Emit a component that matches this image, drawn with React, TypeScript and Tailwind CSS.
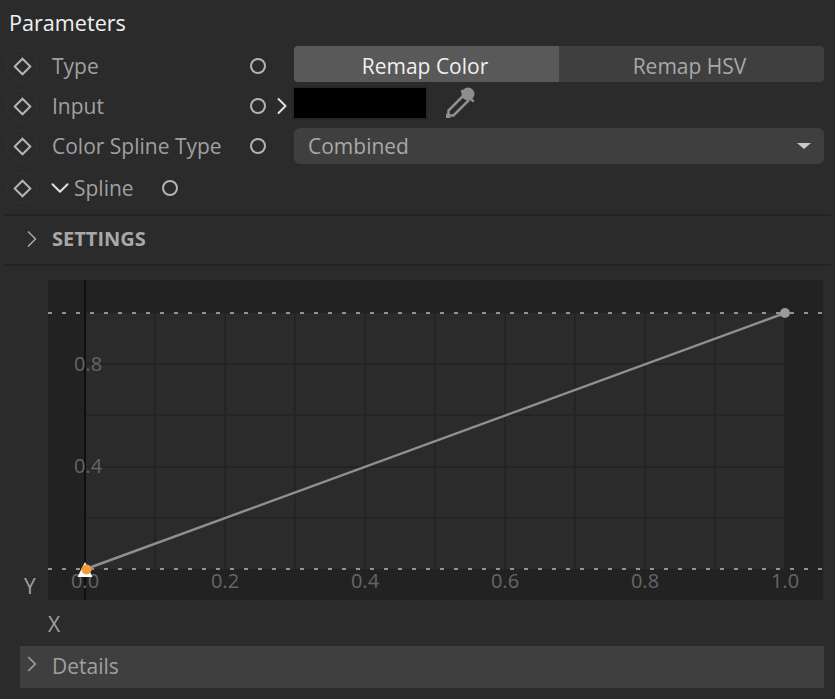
import type { ReactNode } from 'react';
import { ChevronDown, ChevronRight } from 'lucide-react';

const font = { fontFamily: '"Open Sans", "Noto Sans", sans-serif' };

function KeyDiamond() {
  return (
    <span className="flex h-8 w-8 shrink-0 items-center justify-center rounded-full border border-[#323232]">
      <span className="h-[13px] w-[13px] rotate-45 border-2 border-[#b4b4b4]" />
    </span>
  );
}

function Socket() {
  return <span className="block h-4 w-4 shrink-0 rounded-full border-[2.5px] border-[#b4b4b4]" />;
}

function Row({ label, children, arrow }: { label: string; children?: ReactNode; arrow?: boolean }) {
  return (
    <div className="flex h-10 items-center">
      <div className="ml-[6px] mr-[14px]">
        <KeyDiamond />
      </div>
      <span className="w-[198px] shrink-0 text-[#a0a0a0]">{label}</span>
      <Socket />
      <span className="flex w-[28px] shrink-0 justify-center">
        {arrow && (
          <ChevronRight className="h-[28px] w-[28px] shrink-0 translate-x-[2px] text-[#e0e0e0]" strokeWidth={1.7} />
        )}
      </span>
      {children}
    </div>
  );
}

function SplineChart() {
  const xTicks = [85, 155, 225, 295, 365, 435, 505, 575, 645, 715, 785];
  const yTicks = [364, 415, 467, 518];
  const labels = [
    [85, '0.0'],
    [225, '0.2'],
    [365, '0.4'],
    [505, '0.6'],
    [645, '0.8'],
    [785, '1.0'],
  ] as const;
  return (
    <svg width={775} height={320} viewBox="48 280 775 320" className="block">
      <rect x={48} y={280} width={775} height={320} fill="#222222" />
      <rect x={85} y={313} width={700} height={256} fill="#2b2b2b" />
      {xTicks.slice(1).map((x) => (
        <line key={x} x1={x} y1={280} x2={x} y2={600} stroke="#232323" strokeWidth={1.5} />
      ))}
      {yTicks.map((y) => (
        <line key={y} x1={48} y1={y} x2={823} y2={y} stroke="#232323" strokeWidth={1.5} />
      ))}
      <line x1={85} y1={280} x2={85} y2={600} stroke="#0f0f0f" strokeWidth={2} />
      <line x1={48} y1={313} x2={823} y2={313} stroke="#b8b8b8" strokeWidth={1.5} strokeDasharray="4 10" />
      <line x1={48} y1={569} x2={823} y2={569} stroke="#b8b8b8" strokeWidth={1.5} strokeDasharray="4 10" />
      <g fill="#666666" fontSize={20} textAnchor="middle" style={font}>
        {labels.map(([x, t]) => (
          <text key={t} x={x} y={588}>
            {t}
          </text>
        ))}
        <text x={88} y={371}>0.8</text>
        <text x={88} y={473}>0.4</text>
      </g>
      <line x1={86} y1={569} x2={785} y2={313} stroke="#909090" strokeWidth={2.4} />
      <circle cx={785} cy={313} r={5} fill="#9a9a9a" />
      <polygon points="85,562 92.500,577 77.500,577" fill="#ffffff" />
      <circle cx={86.500} cy={569.500} r={5} fill="#f89a36" />
    </svg>
  );
}

export default function App() {
  return (
    <div className="h-[699px] w-[835px] overflow-hidden bg-[#2b2b2b] text-[21px] leading-none" style={font}>
      <div className="flex h-[46px] items-center pl-[9px] text-[21.600px] text-[#f0f0f0]">Parameters</div>

      <Row label="Type">
        <div className="flex h-9 w-[530px] -translate-y-[2px] overflow-hidden rounded-[4px]">
          <div className="flex w-[265px] items-center justify-center bg-[#595959] pr-[3px] pt-[4px] text-[#f0f0f0]">Remap Color</div>
          <div className="flex flex-1 items-center justify-center bg-[#3f3f3f] pr-[4px] pt-[4px] text-[#a8a8a8]">Remap HSV</div>
        </div>
      </Row>

      <Row label="Input" arrow>
        <div className="-ml-[2px] h-[34px] w-[136px] -translate-y-[3px] border-2 border-[#262626] bg-black" />
        <svg width={30} height={32} viewBox="0 0 30 32" className="ml-[18px] -translate-y-[3px]">
          <circle cx={22} cy={7} r={6.500} fill="#8e8e8e" />
          <path d="M16 4l11 10" stroke="#8e8e8e" strokeWidth={2.500} strokeLinecap="round" />
          <path d="M18 8L2.500 23.500v5h5L23 13" fill="none" stroke="#8e8e8e" strokeWidth={2.500} />
          <path d="M0 26l5 5H0z" fill="#8e8e8e" />
        </svg>
      </Row>

      <Row label="Color Spline Type">
        <div className="flex h-9 w-[530px] items-center justify-between rounded-[6px] bg-[#3f3f3f] pl-[14px] pr-[13px] text-[#a8a8a8]">
          Combined
          <span className="h-0 w-0 border-x-[7px] border-t-[6px] border-x-transparent border-t-[#c8c8c8]" />
        </div>
      </Row>

      <div className="flex h-11 items-center">
        <div className="ml-[6px] mr-[14px]">
          <KeyDiamond />
        </div>
        <ChevronDown className="-ml-[7px] -mr-[1px] h-[30px] w-[30px] shrink-0 text-[#e0e0e0]" strokeWidth={1.6} />
        <span className="w-[88px] shrink-0 text-[#a0a0a0]">Spline</span>
        <Socket />
      </div>

      <div className="mx-[4px] mt-[4px] flex h-[52px] items-center border-y-2 border-[#232323] pb-[2px]">
        <ChevronRight className="ml-[13.500px] mr-[6.500px] h-7 w-7 shrink-0 text-[#a0a0a0]" strokeWidth={1.5} />
        <span className="text-[20px] font-bold text-[#a8a8a8]">SETTINGS</span>
      </div>

      <div className="ml-[48px] mt-[14px]">
        <SplineChart />
      </div>

      <div className="relative h-[46px]">
        <span className="absolute left-[24px] top-[-24px] text-[#a0a0a0]">Y</span>
        <span className="absolute left-[48px] top-[14px] text-[#a0a0a0]">X</span>
      </div>

      <div className="ml-[20px] mr-[11px] flex h-[42px] items-center bg-[#3f3f3f] pb-[2px] text-[#a0a0a0]">
        <ChevronRight className="-ml-[1.500px] mr-[7.500px] h-[26px] w-[26px] shrink-0 -translate-y-[2px] text-[#a0a0a0]" strokeWidth={1.6} />
        Details
      </div>
    </div>
  );
}
